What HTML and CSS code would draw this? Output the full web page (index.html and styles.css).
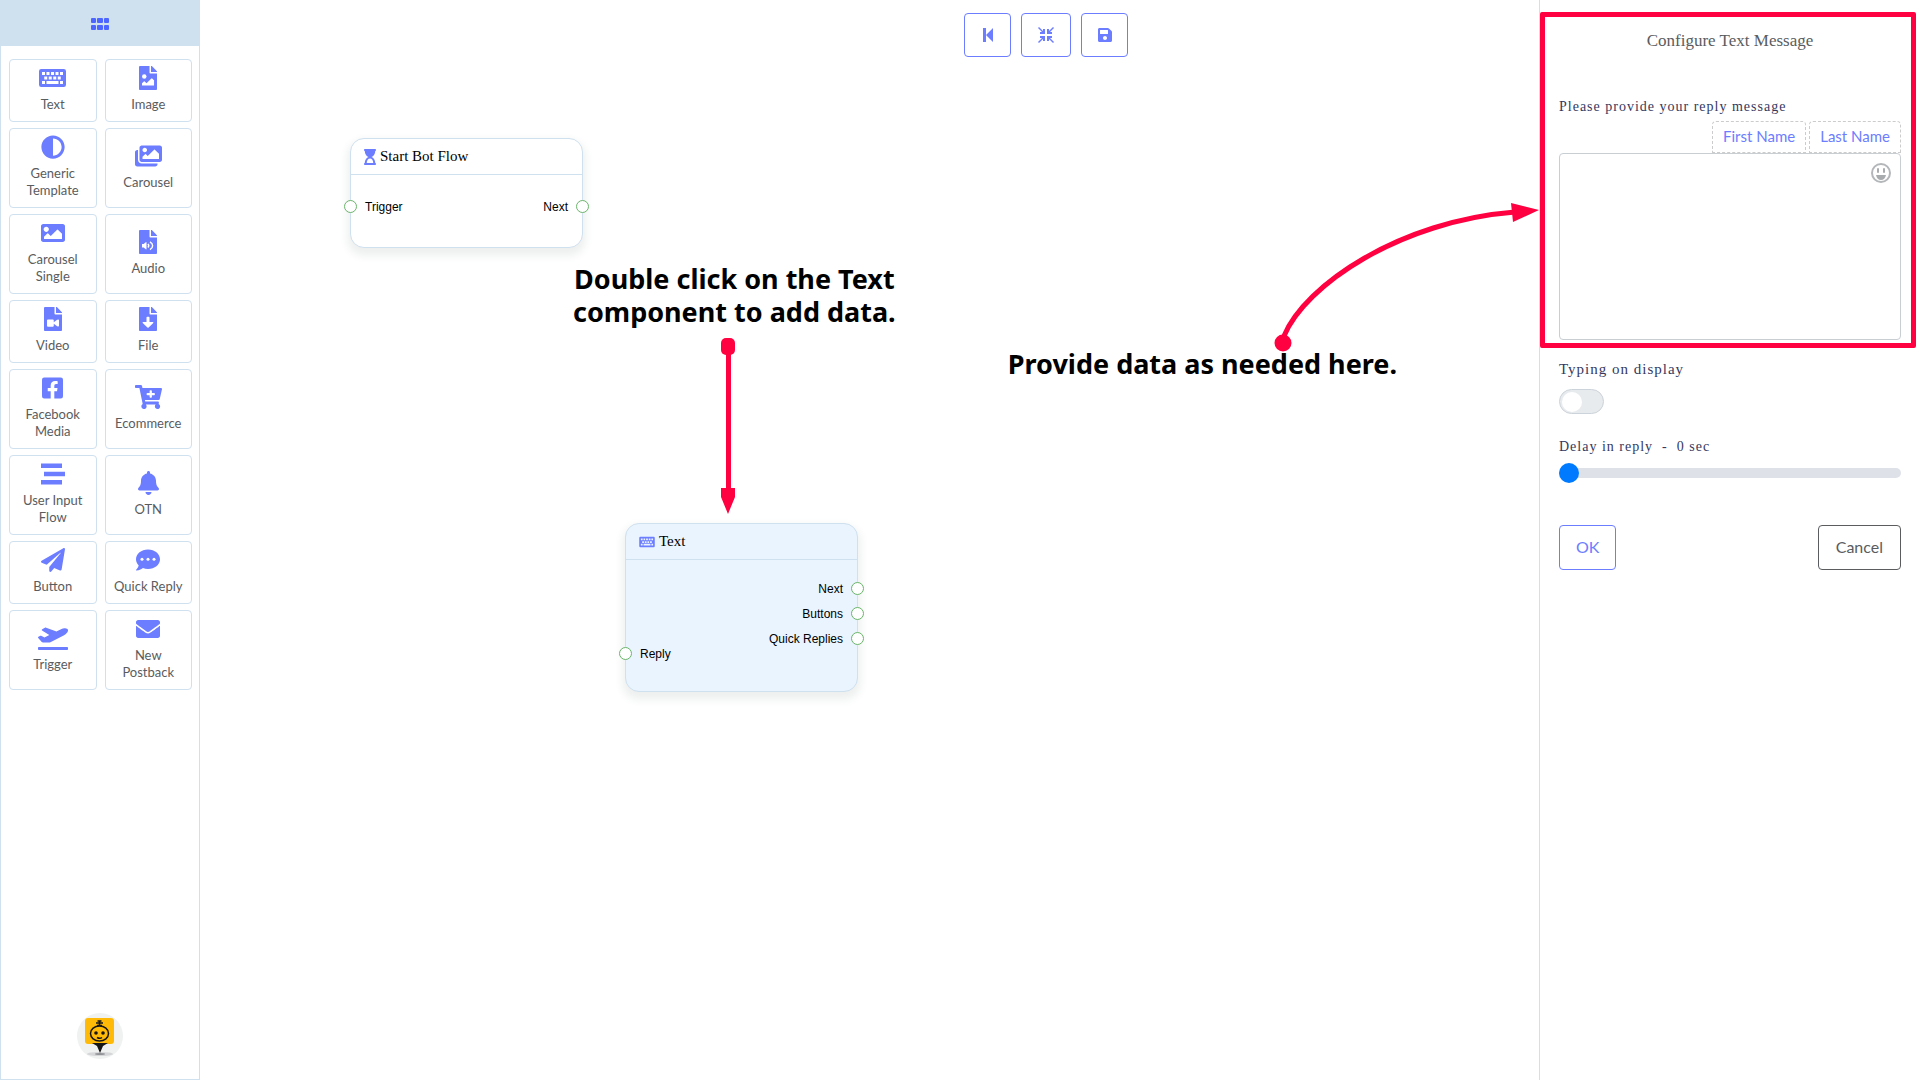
FILE: index.html
```html
<!DOCTYPE html>
<html lang="en">
<head>
  <meta charset="UTF-8">
  <title>Bot Flow Builder</title>
  <link rel="stylesheet" href="styles.css">
</head>
<body>
  <svg class="defs" width="0" height="0">
    <symbol id="keyboard" viewBox="0 0 576 512">
      <path fill-rule="evenodd" d="M528 448H48Q0 448 0 400V112Q0 64 48 64H528Q576 64 576 112V400Q576 448 528 448zM64 128h64v64H64zM160 128h64v64h-64zM256 128h64v64h-64zM352 128h64v64h-64zM448 128h64v64h-64zM112 224h64v64h-64zM208 224h64v64h-64zM304 224h64v64h-64zM400 224h64v64h-64zM64 320h64v64H64zM160 320h256v64H160zM448 320h64v64h-64z"/>
    </symbol>
    <symbol id="file" viewBox="0 0 384 512">
      <path d="M384 121.941V128H256V0h6.059c6.365 0 12.47 2.529 16.971 7.029l97.941 97.941A24.005 24.005 0 0 1 384 121.941zM248 160c-13.2 0-24-10.8-24-24V0H24C10.745 0 0 10.745 0 24v464c0 13.255 10.745 24 24 24h336c13.255 0 24-10.745 24-24V160H248z"/>
    </symbol>
  </svg>

  <div class="app">
    <aside class="sidebar">
      <div class="sidebar-header">
        <svg width="18" height="12" viewBox="0 0 18 12"><rect width="5" height="5" rx="1"/><rect x="6" width="6" height="5" rx="1"/><rect x="13" width="5" height="5" rx="1"/><rect y="7" width="5" height="5" rx="1"/><rect x="6" y="7" width="6" height="5" rx="1"/><rect x="13" y="7" width="5" height="5" rx="1"/></svg>
      </div>
      <div class="components">
        <button class="component"><svg viewBox="0 0 576 512"><use href="#keyboard"/></svg>Text</button>
        <button class="component"><svg viewBox="0 0 384 512"><use href="#file"/><g class="cut"><circle cx="112" cy="224" r="48"/><path d="M64 416v-48l40-40q8-6 17 0l39 40 104-104q8-6 17 0l40 40v112z"/></g></svg>Image</button>
        <button class="component"><svg viewBox="0 0 512 512"><path d="M8 256c0 136.966 111.033 248 248 248s248-111.034 248-248S392.966 8 256 8 8 119.033 8 256zm248 184V72c101.705 0 184 82.311 184 184 0 101.705-82.311 184-184 184z"/></svg>Generic<br>Template</button>
        <button class="component"><svg viewBox="0 0 576 512"><path d="M480 416v16c0 26.51-21.49 48-48 48H48c-26.51 0-48-21.49-48-48V176c0-26.51 21.49-48 48-48h16v208c0 44.112 35.888 80 80 80h336zm96-80V80c0-26.51-21.49-48-48-48H144c-26.51 0-48 21.49-48 48v256c0 26.51 21.49 48 48 48h384c26.51 0 48-21.49 48-48zM256 128c0 26.51-21.49 48-48 48s-48-21.49-48-48 21.49-48 48-48 48 21.49 48 48zm-96 144l55.515-55.515c4.686-4.686 12.284-4.686 16.971 0L272 256l135.515-135.515c4.686-4.686 12.284-4.686 16.971 0L512 208v112H160v-48z"/></svg>Carousel</button>
        <button class="component"><svg viewBox="0 0 512 512"><path d="M464 448H48c-26.51 0-48-21.49-48-48V112c0-26.51 21.49-48 48-48h416c26.51 0 48 21.49 48 48v288c0 26.51-21.49 48-48 48zM112 120c-30.928 0-56 25.072-56 56s25.072 56 56 56 56-25.072 56-56-25.072-56-56-56zM64 384h384V272l-87.515-87.515c-4.686-4.686-12.284-4.686-16.971 0L208 320l-55.515-55.515c-4.686-4.686-12.284-4.686-16.971 0L64 336v48z"/></svg>Carousel<br>Single</button>
        <button class="component"><svg viewBox="0 0 384 512"><use href="#file"/><path class="cut" d="M64 300h36l44-38q16-10 16 8v132q0 18-16 8l-44-38H64z"/><path class="wave" d="M190 300q36 36 0 72M234 254c76 42 76 122 0 164"/></svg>Audio</button>
        <button class="component"><svg viewBox="0 0 384 512"><use href="#file"/><path class="cut" d="M84 264h104q20 0 20 20v40l72-52q40-20 40 12v112q0 32-40 12l-72-52v44q0 20-20 20H84q-20 0-20-20V284q0-20 20-20z"/></svg>Video</button>
        <button class="component"><svg viewBox="0 0 384 512"><use href="#file"/><path class="cut" d="M160 224q0-16 16-16h32q16 0 16 16v96h72q20 4 8 20L200 440q-8 8-16 0L80 340q-12-16 8-20h72z"/></svg>File</button>
        <button class="component"><svg viewBox="0 0 448 512"><path d="M400 32H48A48 48 0 0 0 0 80v352a48 48 0 0 0 48 48h137.25V327.69h-63V256h63v-54.64c0-62.15 37-96.48 93.67-96.48 27.14 0 55.52 4.84 55.52 4.84v61h-31.27c-30.81 0-40.42 19.12-40.42 38.73V256h68.78l-11 71.69h-57.78V480H400a48 48 0 0 0 48-48V80a48 48 0 0 0-48-48z"/></svg>Facebook<br>Media</button>
        <button class="component"><svg viewBox="0 0 576 512"><path d="M504.717 320H211.572l6.545 32h268.418c15.401 0 26.816 14.301 23.403 29.319l-5.517 24.276C523.112 414.668 536 433.828 536 456c0 31.202-25.519 56.444-56.824 55.994-29.823-.429-54.35-24.631-55.155-54.447-.44-16.287 6.085-31.049 16.803-41.548H231.176C241.553 426.165 248 440.326 248 456c0 31.813-26.528 57.431-58.67 55.938-28.54-1.325-51.751-24.385-53.251-52.917-1.158-22.034 10.436-41.455 28.051-51.586L93.883 64H24C10.745 64 0 53.255 0 40V24C0 10.745 10.745 0 24 0h102.529c11.401 0 21.228 8.021 23.513 19.19L159.208 64H551.99c15.401 0 26.816 14.301 23.403 29.319l-47.273 208C525.637 312.246 515.923 320 504.717 320zM408 168h-48v-40c0-8.837-7.163-16-16-16h-16c-8.837 0-16 7.163-16 16v40h-48c-8.837 0-16 7.163-16 16v16c0 8.837 7.163 16 16 16h48v40c0 8.837 7.163 16 16 16h16c8.837 0 16-7.163 16-16v-40h48c8.837 0 16-7.163 16-16v-16c0-8.837-7.163-16-16-16z"/></svg>Ecommerce</button>
        <button class="component"><svg viewBox="0 0 512 512"><path d="M0 32h448v96H0zM64 208h448v96H64zM0 384h448v96H0z"/></svg>User Input<br>Flow</button>
        <button class="component"><svg viewBox="0 0 448 512"><path d="M224 512c35.32 0 63.97-28.65 63.97-64H160.03c0 35.35 28.65 64 63.97 64zm215.39-149.71c-19.32-20.76-55.47-51.99-55.47-154.29 0-77.7-54.48-139.9-127.94-155.16V32c0-17.67-14.32-32-31.98-32s-31.98 14.33-31.98 32v20.84C118.56 68.1 64.08 130.3 64.08 208c0 102.3-36.15 133.53-55.47 154.29-6 6.45-8.66 14.16-8.61 21.71.11 16.4 12.98 32 32.1 32h383.8c19.12 0 32-15.6 32.1-32 .05-7.55-2.61-15.27-8.61-21.71z"/></svg>OTN</button>
        <button class="component"><svg viewBox="0 0 512 512"><path d="M476 3.2L12.5 270.6c-18.1 10.4-15.8 35.6 2.2 43.2L121 358.4l287.3-253.2c5.5-4.9 13.3 2.6 8.6 8.3L176 407v80.5c0 23.6 28.5 32.9 42.5 15.8L282 426l124.6 52.2c14.2 6 30.4-2.9 33-18.2l72-432C515 7.8 493.3-6.8 476 3.2z"/></svg>Button</button>
        <button class="component"><svg viewBox="0 0 512 512"><path d="M256 32C114.6 32 0 125.1 0 240c0 49.6 21.4 95 57 130.7C44.5 421.1 2.7 466 2.2 466.5c-2.2 2.3-2.8 5.7-1.5 8.7S4.8 480 8 480c66.3 0 116-31.8 140.6-51.4 32.7 12.3 69 19.4 107.4 19.4 141.4 0 256-93.1 256-208S397.4 32 256 32z"/><g class="cut"><circle cx="128" cy="240" r="32"/><circle cx="256" cy="240" r="32"/><circle cx="384" cy="240" r="32"/></g></svg>Quick Reply</button>
        <button class="component"><svg viewBox="0 0 640 512"><path d="M624 448H16c-8.84 0-16 7.16-16 16v32c0 8.84 7.16 16 16 16h608c8.84 0 16-7.16 16-16v-32c0-8.84-7.16-16-16-16zM80.55 341.27c6.28 6.84 15.1 10.72 24.33 10.71l130.54-.18a65.62 65.62 0 0 0 29.64-7.12l290.96-147.65c26.74-13.57 50.71-32.94 67.02-58.31 18.31-28.48 20.3-49.09 13.07-63.65-7.21-14.57-24.74-25.27-58.25-27.45-29.85-1.94-59.54 5.92-86.28 19.48l-98.51 49.99-218.7-82.06a17.799 17.799 0 0 0-18-1.11L90.62 67.29c-10.67 5.41-13.25 19.65-5.17 28.53l156.22 98.1-103.21 52.38-72.35-36.47a17.804 17.804 0 0 0-16.07.02L9.91 230.22c-10.44 5.3-13.19 19.12-5.57 28.08l76.21 82.97z"/></svg>Trigger</button>
        <button class="component"><svg viewBox="0 0 512 512"><path d="M502.3 190.8c3.9-3.1 9.7-.2 9.7 4.7V400c0 26.5-21.5 48-48 48H48c-26.5 0-48-21.5-48-48V195.6c0-5 5.7-7.8 9.7-4.7 22.4 17.4 52.1 39.5 154.1 113.6 21.1 15.4 56.7 47.8 92.2 47.6 35.7.3 72-32.8 92.3-47.6 102-74.1 131.6-96.3 154-113.7zM256 320c23.2.4 56.6-29.2 73.4-41.4 132.7-96.3 142.8-104.7 173.4-128.7 5.8-4.5 9.2-11.5 9.2-18.9v-19c0-26.5-21.5-48-48-48H48c-26.5 0-48 21.5-48 48v19c0 7.4 3.4 14.3 9.2 18.9 30.6 23.9 40.7 32.4 173.4 128.7 16.8 12.2 50.2 41.8 73.4 41.4z"/></svg>New<br>Postback</button>
      </div>
      <div class="bot-logo">
        <svg width="46" height="46" viewBox="0 0 46 46">
          <ellipse cx="23" cy="41" rx="13" ry="2" fill="#d5d6d8"/>
          <ellipse cx="23" cy="41" rx="5" ry="1" fill="#929497"/>
          <rect x="8" y="5" width="29" height="26" rx="3" fill="#ffba08"/>
          <path d="M15 30h16l-5 3-3 7-3-7z" fill="#161616"/>
          <ellipse cx="22.5" cy="20.5" rx="9" ry="7.5" fill="#ffba08" stroke="#161616" stroke-width="1.5"/>
          <path d="M20 12.5h5M22.5 12V8M19 10h7M20.5 8h4M20 24.5q3 1.5 5 0" fill="none" stroke="#161616" stroke-width="1.5"/>
          <circle cx="19" cy="20" r="1.8" fill="#161616"/>
          <circle cx="26" cy="20" r="1.8" fill="#161616"/>
        </svg>
      </div>
    </aside>

    <main class="canvas">
      <div class="node node-start">
        <div class="node-title">
          <svg width="12" height="16" viewBox="0 0 384 512"><path d="M360 0H24C10.745 0 0 10.745 0 24v16c0 13.255 10.745 24 24 24 0 90.965 51.016 167.734 120.842 192C75.016 280.266 24 357.035 24 448c-13.255 0-24 10.745-24 24v16c0 13.255 10.745 24 24 24h336c13.255 0 24-10.745 24-24v-16c0-13.255-10.745-24-24-24 0-90.965-51.016-167.734-120.842-192C308.984 231.734 360 154.965 360 64c13.255 0 24-10.745 24-24V24c0-13.255-10.745-24-24-24zm-64 448H88c0-77.458 46.204-144 104-144 57.786 0 104 66.517 104 144z"/></svg>
          Start Bot Flow
        </div>
        <div class="node-body">
          <div class="ports inputs">
            <div class="port"><i></i>Trigger</div>
          </div>
          <div class="ports outputs">
            <div class="port">Next<i></i></div>
          </div>
        </div>
      </div>

      <div class="node node-text">
        <div class="node-title">
          <svg width="16" height="14" viewBox="0 0 576 512"><use href="#keyboard"/></svg>
          Text
        </div>
        <div class="node-body">
          <div class="ports inputs">
            <div class="port"><i></i>Reply</div>
          </div>
          <div class="ports outputs">
            <div class="port">Next<i></i></div>
            <div class="port">Buttons<i></i></div>
            <div class="port">Quick Replies<i></i></div>
          </div>
        </div>
      </div>

      <p class="hint hint-click">Double click on the Text<br>component to add data.</p>
      <svg class="arrow arrow-down" width="14" height="176" viewBox="0 0 14 176">
        <rect width="14" height="17" rx="5"/>
        <path d="M5 15h5v135H5zM0 150h14v9l-7 17-7-17z"/>
      </svg>

      <p class="hint hint-data">Provide data as needed here.</p>
      <svg class="arrow arrow-curve" width="266" height="150" viewBox="0 0 266 150">
        <circle cx="10" cy="141" r="8.5"/>
        <path class="line" d="M11 134C32 83 127 19 242 10"/>
        <path d="M238 1l28 7-26 12z"/>
      </svg>
    </main>

    <section class="panel">
      <h1>Configure Text Message</h1>
      <label for="reply">Please provide your reply message</label>
      <div class="tags">
        <button class="tag">First Name</button>
        <button class="tag">Last Name</button>
      </div>
      <div class="reply">
        <textarea id="reply"></textarea>
        <button class="emoji" aria-label="Emoji">
          <svg width="22" height="22" viewBox="0 0 22 22"><circle cx="11" cy="11" r="9" fill="none" stroke="#b4b7ba" stroke-width="2"/><rect x="7" y="6" width="2" height="5" rx="1"/><rect x="13" y="6" width="2" height="5" rx="1"/><path d="M6 13h10q-1 5-5 5t-5-5z"/></svg>
        </button>
      </div>
      <label class="typing" for="typing">Typing on display</label>
      <input type="checkbox" class="switch" id="typing">
      <label for="delay">Delay in reply &nbsp;-&nbsp; 0 sec</label>
      <input type="range" class="range" id="delay" min="0" max="60" value="0">
      <div class="actions">
        <button class="btn ok">OK</button>
        <button class="btn cancel">Cancel</button>
      </div>
    </section>
  </div>

  <div class="toolbar">
    <button class="tool" aria-label="Back to start"><svg width="14" height="14" viewBox="0 0 14 14"><path d="M2 0h3v14H2zM5 7l7-7v14z"/></svg></button>
    <button class="tool tool-fit" aria-label="Fit to screen"><svg width="16" height="16" viewBox="0 0 16 16"><path d="M7 2v5H2V5h2L0 1l1-1 4 4V2zM9 2v5h5V5h-2l4-4-1-1-4 4V2zM7 14V9H2v2h2l-4 4 1 1 4-4v2zM9 14V9h5v2h-2l4 4-1 1-4-4v2z"/></svg></button>
    <button class="tool" aria-label="Save"><svg width="14" height="16" viewBox="0 0 448 512"><path d="M433.941 129.941l-83.882-83.882A48 48 0 0 0 316.118 32H48C21.49 32 0 53.49 0 80v352c0 26.51 21.49 48 48 48h352c26.51 0 48-21.49 48-48V163.882a48 48 0 0 0-14.059-33.941zM224 416c-35.346 0-64-28.654-64-64 0-35.346 28.654-64 64-64s64 28.654 64 64c0 35.346-28.654 64-64 64zm96-304.52V212c0 6.627-5.373 12-12 12H76c-6.627 0-12-5.373-12-12V108c0-6.627 5.373-12 12-12h228.52c3.183 0 6.235 1.264 8.485 3.515l3.48 3.48A11.996 11.996 0 0 1 320 111.48z"/></svg></button>
  </div>
</body>
</html>
```

FILE: styles.css
```css
* {
  box-sizing: border-box;
}
body {
  margin: 0;
  background: #fff;
  font-family: Lato, sans-serif;
  color: #5a5c5e;
}
button {
  font-family: inherit;
  background: none;
  cursor: pointer;
}
svg {
  display: block;
  fill: #6c7dff;
}
.defs {
  position: absolute;
}
.app {
  display: flex;
  min-height: 100vh;
}

/* component palette */
.sidebar {
  display: flex;
  flex-direction: column;
  flex: none;
  width: 200px;
  border: 1px solid #cfe0ee;
  border-top: none;
}
.sidebar-header {
  display: flex;
  align-items: center;
  justify-content: center;
  height: 46px;
  padding-top: 2px;
  background: #cfe0ee;
}
.sidebar-header svg {
  fill: #4d66ff;
}
.components {
  display: grid;
  grid-template-columns: 1fr 1fr;
  gap: 6px 8px;
  padding: 13px 7px 13px 8px;
}
.component {
  display: flex;
  flex-direction: column;
  align-items: center;
  justify-content: center;
  padding: 6px 0 8px;
  border: 1px solid #cfe0ee;
  border-radius: 4px;
  font-size: 13px;
  line-height: 17px;
  color: #5a5c5e;
}
.component svg {
  height: 24px;
  margin-bottom: 6px;
}
.cut {
  fill: #fff;
}
.wave {
  fill: none;
  stroke: #fff;
  stroke-width: 30;
}
.bot-logo {
  align-self: center;
  margin-top: auto;
  margin-bottom: 20px;
  border-radius: 50%;
  background: #f0f2f2;
}

/* flow canvas */
.canvas {
  position: relative;
  flex: 1;
}
.toolbar {
  position: absolute;
  top: 13px;
  left: 50%;
  display: flex;
  gap: 10px;
  padding-left: 4px;
}
.tool {
  display: flex;
  align-items: center;
  justify-content: center;
  width: 47px;
  height: 44px;
  padding: 0;
  border: 1px solid #6c7dff;
  border-radius: 4px;
}
.tool-fit {
  width: 50px;
}
.node {
  position: absolute;
  width: 233px;
  border: 1px solid #cfe0ee;
  border-radius: 14px;
  background: #fff;
  box-shadow: 0 5px 8px 3px #eef0f0;
  color: #000;
}
.node-start {
  top: 138px;
  left: 150px;
}
.node-text {
  top: 523px;
  left: 425px;
  background: #e9f4ff;
}
.node-title {
  display: flex;
  align-items: center;
  gap: 4px;
  height: 36px;
  padding-left: 13px;
  border-bottom: 1px solid #cfe0ee;
  font-family: "Liberation Serif", serif;
  font-size: 15px;
}
.node-body {
  display: flex;
  justify-content: space-between;
  padding: 16px 0 25px;
  font-family: "Liberation Sans", sans-serif;
  font-size: 12px;
}
.node-start .node-body {
  padding: 19px 0 28px;
}
.port {
  display: flex;
  align-items: center;
  gap: 8px;
  height: 25px;
}
.port i {
  width: 13px;
  height: 13px;
  border: 1px solid #6ab56a;
  border-radius: 50%;
  background: #fff;
}
.inputs {
  align-self: flex-end;
  margin-left: -7px;
}
.outputs {
  margin-right: -7px;
}
.outputs .port {
  justify-content: flex-end;
}
.node-text .inputs {
  padding-top: 65px;
}

/* walkthrough notes */
.hint {
  position: absolute;
  margin: 0;
  font: bold 27px/33px "Noto Sans", sans-serif;
  color: #000;
  text-align: center;
  white-space: nowrap;
}
.hint-click {
  top: 262px;
  left: 373px;
}
.hint-data {
  top: 347px;
  right: 142px;
}
.arrow {
  position: absolute;
  fill: #ff0040;
}
.arrow-down {
  top: 338px;
  left: 521px;
}
.arrow-curve {
  top: 202px;
  right: 0;
}
.arrow .line {
  fill: none;
  stroke: #ff0040;
  stroke-width: 5;
}

/* settings panel */
.panel {
  position: relative;
  display: flex;
  flex-direction: column;
  flex: none;
  width: 381px;
  padding: 31px 19px;
  border-left: 1px solid #cfe0ee;
}
.panel::after {
  content: "";
  position: absolute;
  box-sizing: border-box;
  top: 12px;
  left: 0;
  right: 4px;
  height: 336px;
  border: 5px solid #ff0040;
  border-radius: 2px;
  pointer-events: none;
}
h1 {
  margin: 0 0 46px;
  font: 17px/20px "Liberation Serif", serif;
  text-align: center;
}
label {
  font: 14px/20px "Liberation Serif", serif;
  letter-spacing: 1px;
  color: #34395e;
}
.tags {
  display: flex;
  justify-content: flex-end;
  gap: 3px;
  padding-top: 4px;
}
.tag {
  height: 32px;
  padding: 0 10px 2px;
  border: 1px dashed #ccc;
  border-radius: 4px 4px 0 0;
  font-size: 15px;
  color: #6c7dff;
}
.reply {
  position: relative;
}
textarea {
  display: block;
  width: 100%;
  height: 187px;
  padding: 10px 40px 10px 15px;
  border: 1px solid #c9ced3;
  border-radius: 4px;
  font: 16px Lato, sans-serif;
  resize: none;
}
.emoji {
  position: absolute;
  top: 9px;
  right: 9px;
  padding: 0;
  border: none;
}
.emoji svg {
  fill: #a9acaf;
}
.typing {
  margin-top: 19px;
  font-size: 15px;
}
.switch {
  appearance: none;
  width: 45px;
  height: 25px;
  margin: 10px 0 23px;
  padding: 2px;
  border: 1px solid #cdd3da;
  border-radius: 13px;
  background: #e8ebee;
}
.switch::before {
  content: "";
  display: block;
  width: 20px;
  height: 20px;
  border-radius: 50%;
  background: #fff;
}
.switch:checked::before {
  margin-left: auto;
}
.range {
  appearance: none;
  width: 100%;
  height: 10px;
  margin: 11px 0 47px;
  border-radius: 5px;
  background: #dee2e8;
}
.range::-webkit-slider-thumb {
  appearance: none;
  width: 20px;
  height: 20px;
  border-radius: 50%;
  background: #007bff;
}
.actions {
  display: flex;
  justify-content: space-between;
}
.btn {
  height: 45px;
  padding: 0 17px 2px;
  border: 1px solid #6c7dff;
  border-radius: 4px;
  font-size: 16px;
  color: #6c7dff;
}
.ok {
  padding: 0 16px 2px;
}
.cancel {
  border-color: #5a5c5e;
  color: #5a5c5e;
}
```
